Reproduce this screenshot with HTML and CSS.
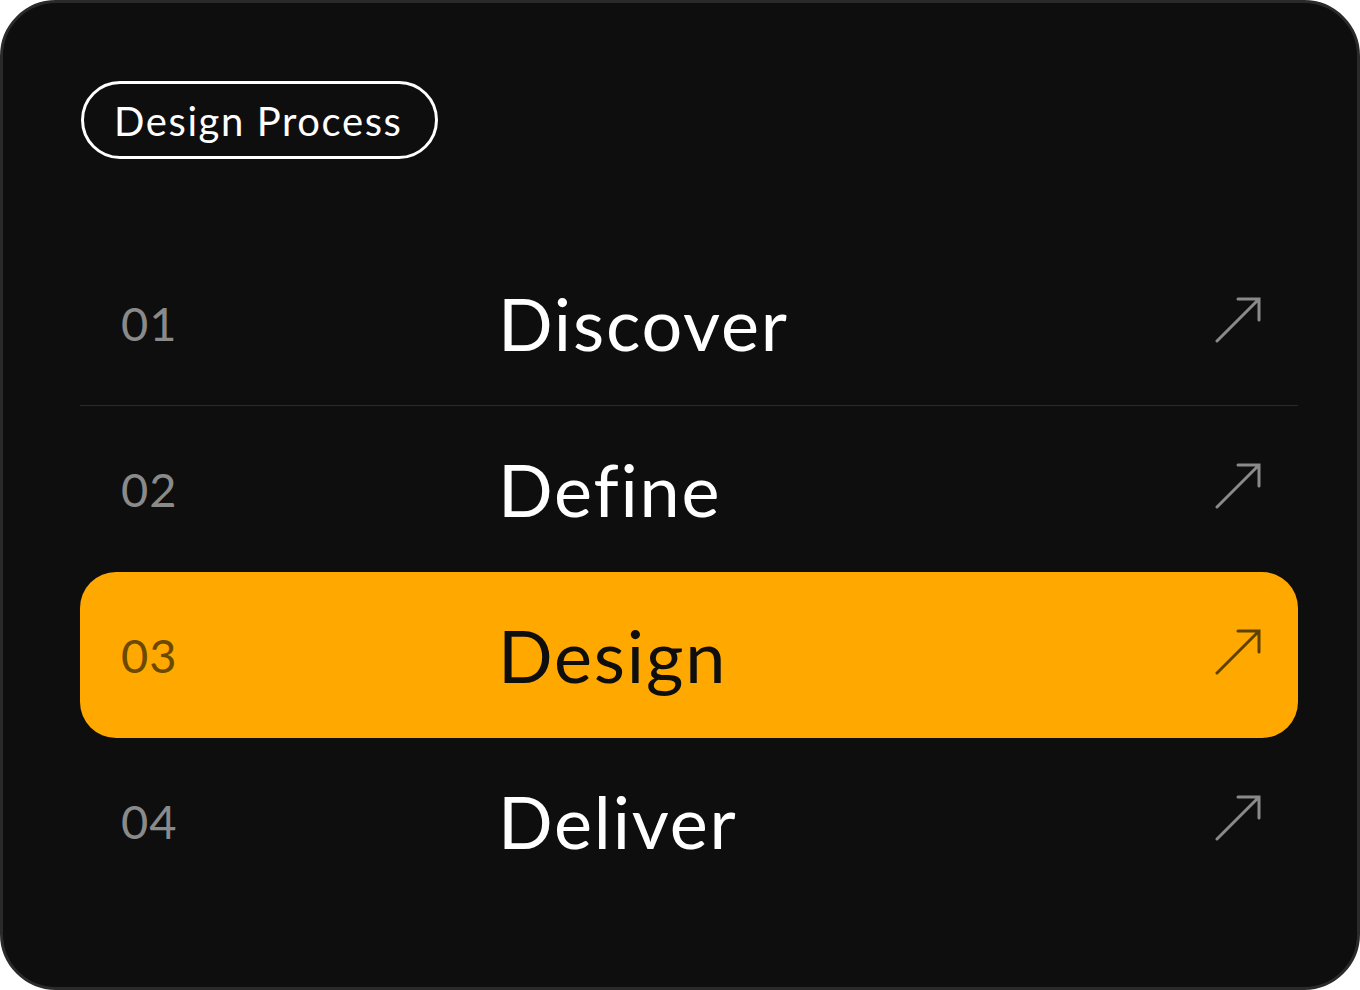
FILE: index.html
```html
<!DOCTYPE html>
<html lang="en">
<head>
  <meta charset="UTF-8" />
  <title>Design Process</title>
  <link rel="stylesheet" href="styles.css">
</head>
<body>
  <div class="card">
    <div class="tag">Design Process</div>

    <ul class="steps">
      <li class="step">
        <span class="num">01</span>
        <span class="title">Discover</span>
        <svg class="arrow" viewBox="0 0 48 48"><path d="M3 46 L45 4 M24 4 H45 V25" /></svg>
      </li>
      <li class="step before-active">
        <span class="num">02</span>
        <span class="title">Define</span>
        <svg class="arrow" viewBox="0 0 48 48"><path d="M3 46 L45 4 M24 4 H45 V25" /></svg>
      </li>
      <li class="step active">
        <span class="num">03</span>
        <span class="title">Design</span>
        <svg class="arrow" viewBox="0 0 48 48"><path d="M3 46 L45 4 M24 4 H45 V25" /></svg>
      </li>
      <li class="step">
        <span class="num">04</span>
        <span class="title">Deliver</span>
        <svg class="arrow" viewBox="0 0 48 48"><path d="M3 46 L45 4 M24 4 H45 V25" /></svg>
      </li>
    </ul>
  </div>
</body>
</html>
```

FILE: styles.css
```css
html, body {
  margin: 0;
  background: #ffffff;
}
body {
  font-family: Lato, 'Noto Sans', sans-serif;
  font-variant-ligatures: none;
  color: white;
}
.card {
  box-sizing: border-box;
  height: 990px;
  background: #0e0e0e;
  border: 3px solid #2a2a2a;
  border-radius: 56px;
  padding: 78px 59px 0 78px;
}
.tag {
  display: inline-block;
  box-sizing: border-box;
  height: 78px;
  line-height: 74px;
  padding: 0 32px 0 30px;
  border: 3px solid white;
  border-radius: 40px;
  font-size: 40px;
  letter-spacing: 1.6px;
}
.steps {
  list-style: none;
  margin: 81px 0 0 -1px;
  padding: 0;
}
.step {
  display: grid;
  grid-template-columns: 377px 1fr auto;
  align-items: center;
  height: 166px;
  padding: 0 36px 0 41px;
  box-sizing: border-box;
  border-bottom: 1px solid #2a2a2a;
}
.step:last-child,
.step.before-active,
.step.active {
  border-bottom-color: transparent;
}
.num {
  font-size: 47px;
  color: #8a8a8a;
  letter-spacing: 1px;
}
.title {
  font-size: 72px;
  letter-spacing: 1.8px;
}
.arrow {
  width: 48px;
  height: 48px;
  margin-top: -8px;
  fill: none;
  stroke: #8a8a8a;
  stroke-width: 3;
  stroke-linecap: round;
}
.step.active {
  background: #ffa800;
  color: #0e0e0e;
  border-radius: 36px;
}
.step.active .num {
  color: #6b4a00;
}
.step.active .arrow {
  stroke: #5e4100;
}
```
